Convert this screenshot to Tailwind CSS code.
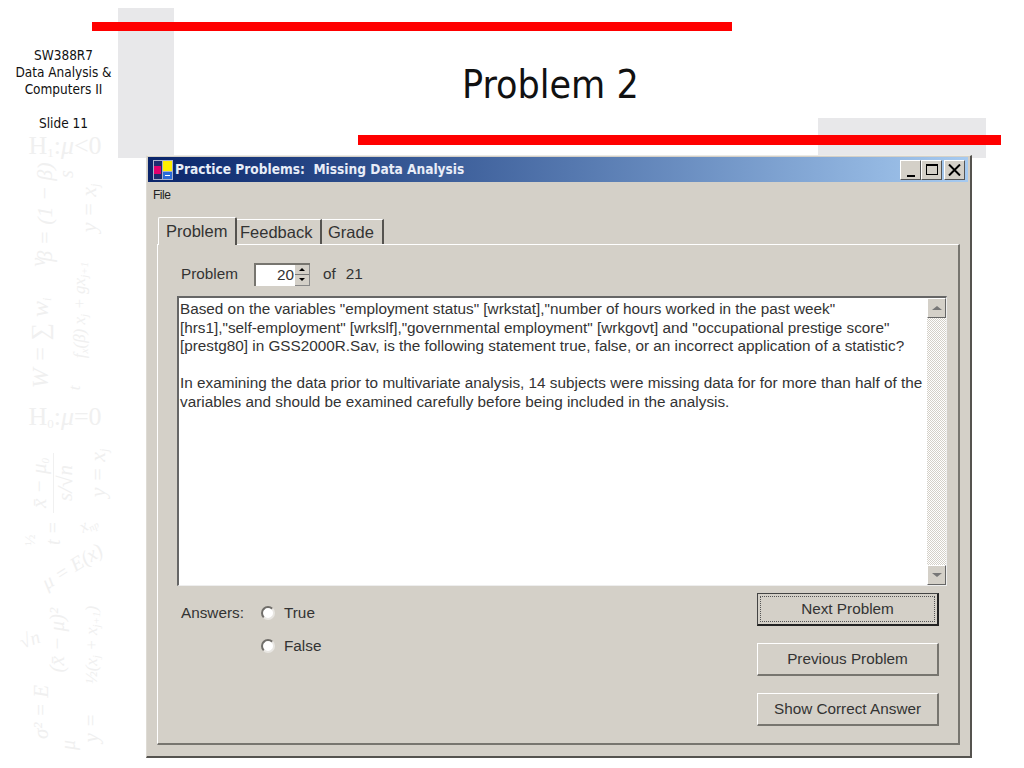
<!DOCTYPE html>
<html lang="en">
<head>
  <meta charset="UTF-8" />
  <title>Problem 2</title>
  <script src="https://cdn.jsdelivr.net/npm/@tailwindcss/browser@4"></script>
</head>
<body class="bg-white">
  <div class="relative w-[1024px] h-[768px] overflow-hidden bg-white font-['Liberation_Sans',sans-serif]">
    <!-- Slide decoration -->
    <div class="absolute left-[118px] top-[8px] w-[56px] h-[150px] bg-[#e8e8ea]"></div>
    <div class="absolute left-[818px] top-[118px] w-[168px] h-[40px] bg-[#e8e8ea]"></div>
    <div class="absolute left-[92px] top-[22px] w-[640px] h-[9px] bg-[#ff0000]"></div>
    <div class="absolute left-[358px] top-[135px] w-[643px] h-[10px] bg-[#ff0000]"></div>

    <!-- Slide side label -->
    <div class="absolute left-[0px] top-[47px] w-[127px] text-center font-['DejaVu_Sans_Condensed','DejaVu_Sans',sans-serif] text-[13.5px] leading-[17px] text-[#111]">
      <p>SW388R7</p>
      <p>Data Analysis &amp;</p>
      <p>Computers II</p>
      <p class="mt-[17px]">Slide 11</p>
    </div>

    <!-- Math watermark, each formula placed by its centre -->
    <div class="absolute left-[0px] top-[0px] w-[146px] h-[768px] font-['Liberation_Serif',serif] italic text-[#f0f0f0]">
      <span class="absolute left-[65px] top-[145px] -translate-x-1/2 -translate-y-1/2 text-[26px] not-italic whitespace-nowrap">H<sub class="text-[13px]">1</sub>:<i>μ</i>&lt;0</span>
      <span class="absolute left-[66px] top-[174px] -translate-x-1/2 -translate-y-1/2 -rotate-90 text-[20px] whitespace-nowrap">s</span>
      <span class="absolute left-[44px] top-[212px] -translate-x-1/2 -translate-y-1/2 -rotate-90 text-[22px] whitespace-nowrap">β = (1 − β)</span>
      <span class="absolute left-[88px] top-[208px] -translate-x-1/2 -translate-y-1/2 -rotate-90 text-[22px] whitespace-nowrap">y = x<sub class="text-[12px]">j</sub></span>
      <span class="absolute left-[38px] top-[262px] -translate-x-1/2 -translate-y-1/2 -rotate-90 text-[20px] whitespace-nowrap">ν</span>
      <span class="absolute left-[40px] top-[343px] -translate-x-1/2 -translate-y-1/2 -rotate-90 text-[24px] whitespace-nowrap">W = ∑ w<sub class="text-[12px]">i</sub></span>
      <span class="absolute left-[80px] top-[310px] -translate-x-1/2 -translate-y-1/2 -rotate-90 text-[17px] whitespace-nowrap">f<sub class="text-[11px]">x</sub>(β) x<sub class="text-[11px]">j</sub> + gx<sub class="text-[11px]">j+1</sub></span>
      <span class="absolute left-[75px] top-[388px] -translate-x-1/2 -translate-y-1/2 -rotate-90 text-[17px] whitespace-nowrap">t</span>
      <span class="absolute left-[65px] top-[416px] -translate-x-1/2 -translate-y-1/2 text-[26px] not-italic whitespace-nowrap">H<sub class="text-[13px]">0</sub>:<i>μ</i>=0</span>
      <span class="absolute left-[40px] top-[483px] -translate-x-1/2 -translate-y-1/2 -rotate-90 text-[21px] whitespace-nowrap">x̄ − μ<sub class="text-[11px]">0</sub></span>
      <span class="absolute left-[53px] top-[453px] w-[1px] h-[60px] bg-[#f0f0f0]"></span>
      <span class="absolute left-[66px] top-[483px] -translate-x-1/2 -translate-y-1/2 -rotate-90 text-[21px] whitespace-nowrap">s/√n</span>
      <span class="absolute left-[97px] top-[473px] -translate-x-1/2 -translate-y-1/2 -rotate-90 text-[22px] whitespace-nowrap">y = x<sub class="text-[12px]">j</sub></span>
      <span class="absolute left-[30px] top-[540px] -translate-x-1/2 -translate-y-1/2 -rotate-90 text-[15px] not-italic whitespace-nowrap">½</span>
      <span class="absolute left-[53px] top-[533px] -translate-x-1/2 -translate-y-1/2 -rotate-90 text-[20px] whitespace-nowrap">t =</span>
      <span class="absolute left-[88px] top-[524px] -translate-x-1/2 -translate-y-1/2 -rotate-[30deg] text-[17px] whitespace-nowrap">x<sub class="text-[10px]">np</sub></span>
      <span class="absolute left-[72px] top-[566px] -translate-x-1/2 -translate-y-1/2 -rotate-[32deg] text-[20px] whitespace-nowrap">μ = E(x)</span>
      <span class="absolute left-[92px] top-[645px] -translate-x-1/2 -translate-y-1/2 -rotate-90 text-[17px] whitespace-nowrap">½(x<sub class="text-[11px]">j</sub> + x<sub class="text-[11px]">j+1</sub>)</span>
      <span class="absolute left-[30px] top-[640px] -translate-x-1/2 -translate-y-1/2 -rotate-[20deg] text-[19px] whitespace-nowrap">√n</span>
      <span class="absolute left-[58px] top-[640px] -translate-x-1/2 -translate-y-1/2 -rotate-90 text-[21px] whitespace-nowrap">(x̄ − μ)²</span>
      <span class="absolute left-[42px] top-[712px] -translate-x-1/2 -translate-y-1/2 -rotate-90 text-[21px] whitespace-nowrap">σ² = E</span>
      <span class="absolute left-[68px] top-[745px] -translate-x-1/2 -translate-y-1/2 -rotate-90 text-[20px] whitespace-nowrap">μ</span>
      <span class="absolute left-[92px] top-[728px] -translate-x-1/2 -translate-y-1/2 -rotate-90 text-[21px] whitespace-nowrap">y =</span>
    </div>

    <h1 class="absolute left-[462px] top-[63px] font-['DejaVu_Sans_Condensed','DejaVu_Sans',sans-serif] text-[39px] leading-[44px] text-[#111] whitespace-nowrap">Problem 2</h1>

    <!-- Dialog window -->
    <div class="absolute left-[146px] top-[155px] w-[826px] h-[603px] flex flex-col bg-[#d4d0c8] border-t border-l border-t-[#ecebe6] border-l-[#dedbd4] border-r-2 border-b-2 border-r-[#55534f] border-b-[#55534f] p-[1px] pr-[2px] text-[#333] text-[15.3px]">
      <!-- Title bar -->
      <div class="h-[25px] shrink-0 flex items-center pl-[5px] pr-[3px] bg-gradient-to-r from-[#0a246a] to-[#a6caf0]">
        <svg class="w-[20px] h-[20px] shrink-0" viewBox="0 0 20 20">
          <rect x="0" y="0" width="20" height="20" fill="#a9b1cc" />
          <rect x="1" y="1" width="8" height="18" fill="#1c2c70" />
          <rect x="1" y="6" width="7" height="8" fill="#e0006e" />
          <rect x="10" y="1" width="9" height="10" fill="#ffee00" />
          <rect x="10" y="12" width="9" height="7" fill="#2a6ad8" />
          <rect x="12" y="15" width="5" height="1" fill="#ffffff" />
        </svg>
        <span class="ml-[2px] font-['DejaVu_Sans_Condensed','DejaVu_Sans',sans-serif] font-bold text-[13.6px] text-[#e8edf8] whitespace-nowrap">Practice Problems:&nbsp; Missing Data Analysis</span>
        <div class="ml-auto flex">
          <div class="w-[21px] h-[20px] bg-[#d4d0c8] border border-t-white border-l-white border-r-[#555] border-b-[#555] flex items-end justify-center pb-[2px]">
            <div class="w-[8px] h-[2px] bg-black"></div>
          </div>
          <div class="w-[21px] h-[20px] bg-[#d4d0c8] border border-t-white border-l-white border-r-[#555] border-b-[#555] flex items-center justify-center">
            <div class="w-[12px] h-[11px] border border-black border-t-2"></div>
          </div>
          <div class="ml-[2px] w-[21px] h-[20px] bg-[#d4d0c8] border border-t-white border-l-white border-r-[#555] border-b-[#555] flex items-center justify-center">
            <svg class="w-[13px] h-[12px]" viewBox="0 0 13 12"><path d="M1 0.5 L12 11.5 M12 0.5 L1 11.5" stroke="#000" stroke-width="2" fill="none" /></svg>
          </div>
        </div>
      </div>

      <!-- Menu -->
      <div class="h-[26px] shrink-0 pl-[5px] pt-[5px] text-[12px] leading-[16px] tracking-[-0.5px] text-[#222]">File</div>

      <!-- Tabs -->
      <div class="ml-[9px] mr-[8px] pt-[9px] flex-1 flex flex-col min-h-0">
        <div class="h-[27px] shrink-0 flex items-end pl-[1px] text-[16.5px] relative z-10">
          <div class="h-[28px] -mb-[1px] w-[79px] bg-[#d4d0c8] border-t border-l border-t-white border-l-white border-r-2 border-r-[#55534f] rounded-t-[2px] pl-[7px] pt-[2px] leading-[22px]">Problem</div>
          <div class="h-[25px] w-[85px] bg-[#d4d0c8] border-t border-t-white border-r-2 border-r-[#55534f] pl-[3px] leading-[24px]">Feedback</div>
          <div class="h-[25px] w-[62px] bg-[#d4d0c8] border-t border-t-white border-r-2 border-r-[#55534f] pl-[6px] leading-[24px]">Grade</div>
        </div>
        <div class="flex-1 min-h-0 border-t border-l border-t-white border-l-white border-r-2 border-b-2 border-r-[#77756f] border-b-[#77756f] pl-[19px] pr-[12px] pt-[17px]">
          <!-- Spinner row -->
          <div class="h-[24px] flex items-center">
            <span class="ml-[4px] w-[73px]">Problem</span>
            <div class="w-[56px] h-[23px] bg-white border-t-2 border-l-2 border-t-[#77756f] border-l-[#77756f] flex items-center justify-end">
              <span class="pr-[1px]">20</span>
              <div class="w-[15px] h-[21px] flex flex-col bg-[#d4d0c8] border-r border-b border-[#888]">
                <div class="flex-1 flex items-center justify-center border-b border-[#777]"><div class="border-x-[3px] border-b-[3px] border-x-transparent border-b-black"></div></div>
                <div class="flex-1 flex items-center justify-center"><div class="border-x-[3px] border-t-[3px] border-x-transparent border-t-black"></div></div>
              </div>
            </div>
            <span class="ml-[13px]">of</span>
            <span class="ml-[10px]">21</span>
          </div>

          <!-- Problem text -->
          <div class="mt-[10px] h-[290px] w-[770px] flex bg-white border-t-2 border-l-2 border-t-[#666] border-l-[#666] border-b border-r border-b-[#eee] border-r-[#eee]">
            <p class="flex-1 pl-[1px] pt-[2px] text-[15.3px] leading-[18.5px] text-[#333] whitespace-nowrap">Based on the variables "employment status" [wrkstat],"number of hours worked in the past week"<br />[hrs1],"self-employment" [wrkslf],"governmental employment" [wrkgovt] and "occupational prestige score"<br />[prestg80] in GSS2000R.Sav, is the following statement true, false, or an incorrect application of a statistic?<br /><br />In examining the data prior to multivariate analysis, 14 subjects were missing data for for more than half of the<br />variables and should be examined carefully before being included in the analysis.</p>
            <div class="w-[19px] shrink-0 flex flex-col bg-[repeating-conic-gradient(#d4d0c8_0_25%,#ffffff_0_50%)] bg-[length:2px_2px]">
              <div class="h-[20px] bg-[#d4d0c8] border border-t-white border-l-white border-r-[#666] border-b-[#666] flex items-center justify-center"><div class="border-x-[5px] border-b-[4px] border-x-transparent border-b-[#777]"></div></div>
              <div class="mt-auto h-[20px] bg-[#d4d0c8] border border-t-white border-l-white border-r-[#666] border-b-[#666] flex items-center justify-center"><div class="border-x-[5px] border-t-[4px] border-x-transparent border-t-[#777]"></div></div>
            </div>
          </div>

          <!-- Answers and buttons -->
          <div class="mt-[7px] flex">
            <div class="w-[580px] flex pt-[12px]">
              <span class="ml-[4px] w-[80px] leading-[16px]">Answers:</span>
              <div class="flex flex-col gap-[17px]">
                <label class="flex items-center gap-[9px] leading-[16px]"><span class="w-[14px] h-[14px] rounded-full bg-white border-2 border-[#706e6a] border-r-[#e8e6e2] border-b-[#e8e6e2]"></span>True</label>
                <label class="flex items-center gap-[9px] leading-[16px]"><span class="w-[14px] h-[14px] rounded-full bg-white border-2 border-[#706e6a] border-r-[#e8e6e2] border-b-[#e8e6e2]"></span>False</label>
              </div>
            </div>
            <div class="w-[182px] flex flex-col gap-[17px]">
              <button class="h-[33px] border border-t-[#444] border-l-[#444] border-r-2 border-b-2 border-r-[#222] border-b-[#222] p-[2px]"><span class="flex items-center justify-center h-full border border-dotted border-[#555]">Next Problem</span></button>
              <button class="h-[33px] border-t border-l border-t-white border-l-white border-r-2 border-b-2 border-r-[#77756f] border-b-[#77756f]">Previous Problem</button>
              <button class="h-[33px] border-t border-l border-t-white border-l-white border-r-2 border-b-2 border-r-[#77756f] border-b-[#77756f]">Show Correct Answer</button>
            </div>
          </div>
        </div>
      </div>
      <div class="h-[10px] shrink-0"></div>
    </div>
  </div>
</body>
</html>
